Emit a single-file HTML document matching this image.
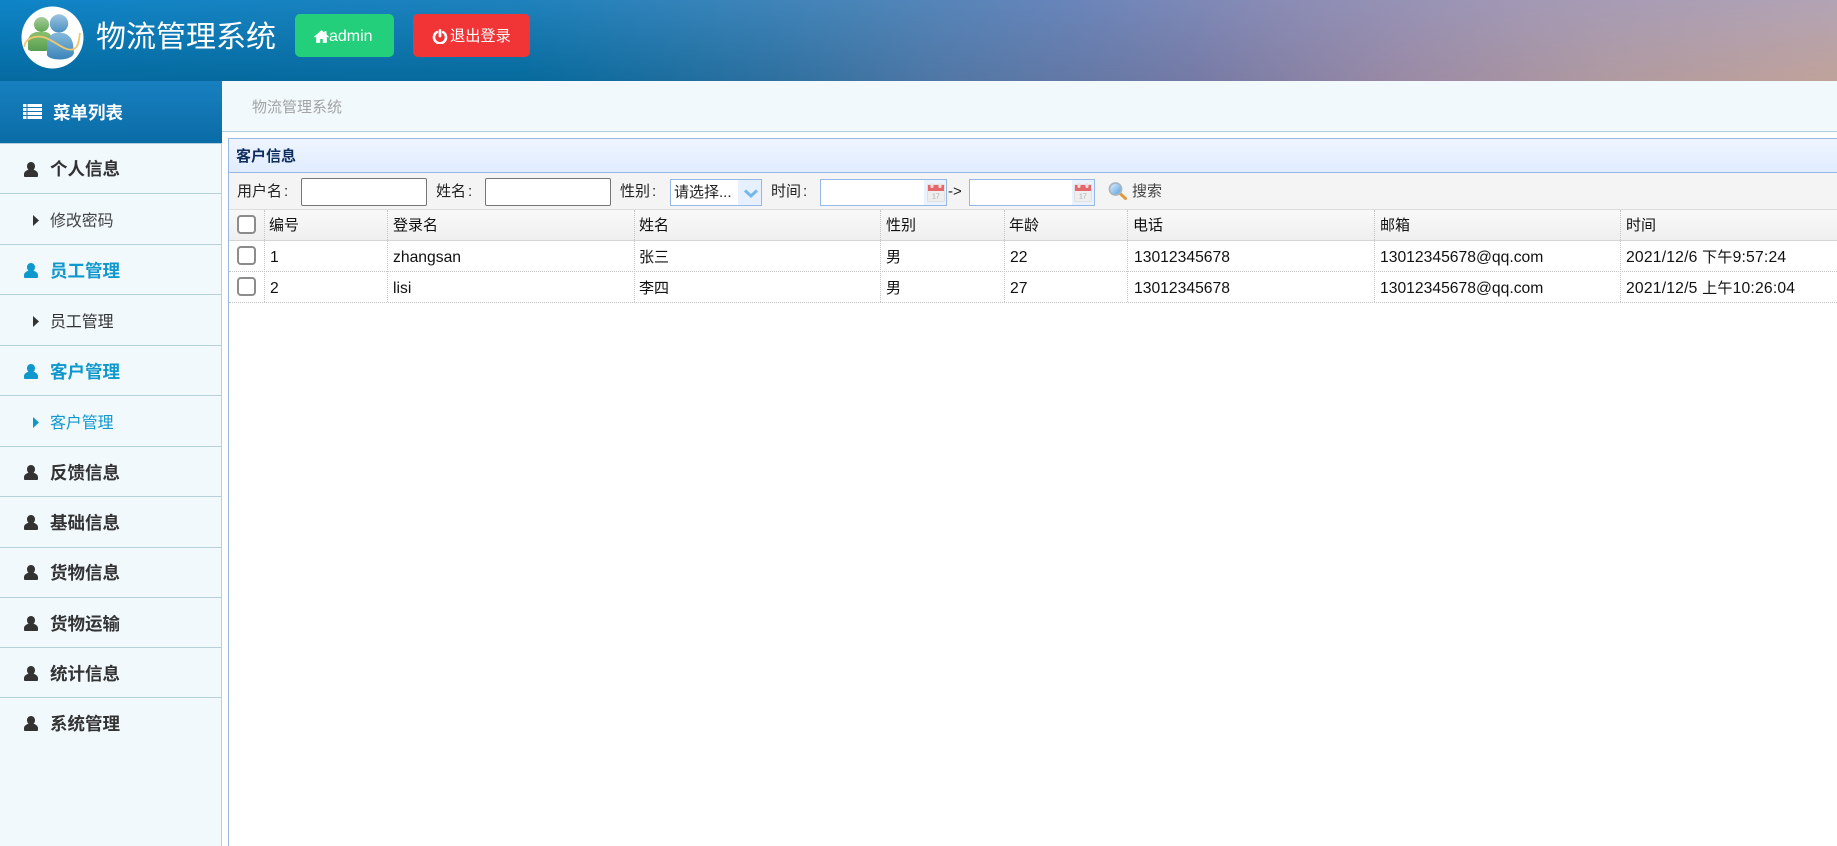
<!DOCTYPE html>
<html lang="zh-CN"><head><meta charset="utf-8"><title>物流管理系统</title>
<style>
html,body{margin:0;padding:0;width:1837px;height:846px;overflow:hidden;background:#fff;font-family:"Liberation Sans","Noto Sans CJK SC",sans-serif;color:#000}
div,span,svg,input{position:absolute;box-sizing:border-box}
.t{white-space:nowrap;line-height:30px;height:30px}
.hd{left:0;top:0;width:1837px;height:81px}
.side{left:0;top:81px;width:222px;height:765px;background:#f1f9fd;border-right:1px solid #b5cfdc}
.menu{left:0;width:221px;border-bottom:1px solid #b5cfdc}
.mt{left:50px;font-size:17.5px;font-weight:bold;color:#333;white-space:nowrap;line-height:24px;height:24px}
.st{left:50px;font-size:15.9px;color:#444;white-space:nowrap;line-height:24px;height:24px}
.ac{color:#0e98cc}
.in{background:#fff;border:1px solid #767676;border-radius:2px;height:28px;top:178px;width:126px}
.eb{background:#fff;border:1px solid #95b8e7;height:27px;top:179px}
.lb{top:178px;font-size:15px;color:#222;white-space:nowrap;line-height:28px;height:28px}
.lb i{font-style:normal;margin-left:2px}
.v{top:210px;height:92px;width:0;border-left:1px dotted #c4c4c4}
.h{left:229px;width:1608px;height:0;border-top:1px dotted #c4c4c4}
.cb{left:237px;width:19px;height:19px;background:#fff;border:2px solid #8c8c8c;border-radius:4px}
.c{font-size:15px;color:#111;white-space:nowrap;line-height:30px;height:30px}
.n{font-size:15.7px}
.d{letter-spacing:.2px}
</style></head><body>
<svg width="0" height="0" style="left:0;top:0"><defs>
<symbol id="u" viewBox="0 0 14 15"><path fill="currentColor" d="M7 0C4.600 0 3 1.900 3 4.300c0 1.500.6 2.700 1.500 3.500C2.200 8.500 0 9.800 0 12.300V14c0 .6.4 1 1 1h12c.6 0 1-.4 1-1v-1.700c0-2.500-2.200-3.800-4.500-4.500.9-.8 1.500-2 1.500-3.500C11 1.900 9.400 0 7 0z"/></symbol>
<symbol id="cal" viewBox="0 0 18 19"><rect x=".5" y="1.500" width="17" height="17" rx="1" fill="#eeeeee" stroke="#e0e0e0"/><rect x="1" y="2" width="16" height="6" fill="#e5676c"/><rect x="3.500" y="0" width="3" height="5" rx="1.500" fill="#f4e0e0"/><rect x="11.500" y="0" width="3" height="5" rx="1.500" fill="#f4e0e0"/><text x="5" y="15.500" font-size="7" fill="#a9a9a9" font-family="Liberation Sans">17</text></symbol>
<linearGradient id="gh" x1="0" y1="0" x2="0" y2="1"><stop offset="0" stop-color="#a8cc9c"/><stop offset="1" stop-color="#5fa855"/></linearGradient>
<linearGradient id="gb" x1="0" y1="0" x2="0" y2="1"><stop offset="0" stop-color="#8cc070"/><stop offset="1" stop-color="#559e50"/></linearGradient>
<linearGradient id="bh" x1="0" y1="0" x2="0" y2="1"><stop offset="0" stop-color="#9cc4e0"/><stop offset="1" stop-color="#4a90c2"/></linearGradient>
<linearGradient id="bb" x1="0" y1="0" x2="0" y2="1"><stop offset="0" stop-color="#85b8da"/><stop offset="1" stop-color="#3a85ba"/></linearGradient>
<linearGradient id="lens" x1="0" y1="0" x2="1" y2="1"><stop offset="0" stop-color="#e8f4ff"/><stop offset="1" stop-color="#4f9de0"/></linearGradient>
</defs></svg>

<div class="hd" style="background:linear-gradient(90deg,#0f85c8 0,#1f82bc 520px,#4a85b8 856px,#6a85ba 1075px,#8a8cb5 1276px,#a399b5 1528px,#b3a4b5 1837px)"></div>
<div class="hd" style="background:linear-gradient(90deg,#056a9f 0,#066a9c 520px,#2d709f 772px,#5077a5 940px,#757aa5 1192px,#9a8aa5 1402px,#b09aa0 1612px,#c0a29a 1837px);-webkit-mask-image:linear-gradient(180deg,transparent,#000);mask-image:linear-gradient(180deg,transparent,#000)"></div>

<svg style="left:21px;top:6px" width="63" height="63" viewBox="21 6 63 63">
<circle cx="52.500" cy="37.500" r="31" fill="#fff"/>
<path d="M28 49V41c0-5 4-8 8-9h10c4 1 6 4 6 8v9c-2 1.500-5 2-8 2H32c-2 0-4-1-4-2z" fill="url(#gb)"/>
<circle cx="41.500" cy="24.500" r="7.500" fill="url(#gh)"/>
<path d="M47 55V44c0-6 4-10 8-11h8c5 1 9 5 10 11l1 9c-1 4-7 6.500-14 6.500-6 0-12-1.500-13-4.500z" fill="url(#bb)"/>
<circle cx="59" cy="23.500" r="9.200" fill="url(#bh)"/>
<path d="M24.500 47C24 39 36 34 46 38S65 51 72 49.500 78.500 41 80 33" fill="none" stroke="#f3c66c" stroke-width="1.800"/>
</svg>
<div class="t" style="left:96px;top:18px;height:40px;line-height:40px;font-size:30px;color:#fff">物流管理系统</div>

<div style="left:295px;top:14px;width:99px;height:43px;background:#23cf7b;border-radius:5px"></div>
<svg style="left:314px;top:30px" width="15" height="13" viewBox="0 0 14 12"><path fill="#fff" d="M7 0 0 6.200l.8.900L2 6v6h3.800V8.300h2.400V12H12V6l1.200 1.100.8-.9-2.300-2.100V1H9.800v1.400z"/></svg>
<div class="t" style="left:329px;top:22px;font-size:16px;color:#fff">admin</div>
<div style="left:413px;top:14px;width:117px;height:43px;background:#f13537;border-radius:5px"></div>
<svg style="left:432px;top:29px" width="16" height="15" viewBox="0 0 16 15"><path fill="none" stroke="#fff" stroke-width="2.600" stroke-linecap="round" d="M4.800 3.200A6 6 0 1 0 11.200 3.200"/><path stroke="#fff" stroke-width="2.800" stroke-linecap="round" d="M8 1.500V7"/></svg>
<div class="t" style="left:450px;top:22px;font-size:15.2px;color:#fff">退出登录</div>

<!-- sidebar -->
<div class="side"></div>
<div style="left:0;top:81px;width:222px;height:62px;background:linear-gradient(180deg,#1880c0,#0a6ca6)"></div>
<svg style="left:23px;top:104px" width="19" height="15" viewBox="0 0 19 15"><path fill="#fff" d="M0 0h3.500v3H0zM4.500 0H19v3H4.500zM0 4h3.500v3H0zM4.500 4H19v3H4.500zM0 8h3.500v3H0zM4.500 8H19v3H4.500zM0 12h3.500v3H0zM4.500 12H19v3H4.500z"/></svg>
<div class="t" style="left:53px;top:98px;font-size:17.5px;font-weight:bold;color:#fff">菜单列表</div>
<div style="left:0;top:143px;width:222px;height:1px;background:#b5cfdc"></div>

<div class="menu" style="top:144px;height:50px"></div>
<svg style="left:24px;top:162px;color:#333" width="14" height="15"><use href="#u"/></svg>
<div class="mt" style="left:50px;top:157px">个人信息</div>
<div class="menu" style="top:194px;height:51px"></div>
<svg style="left:33px;top:215px" width="6" height="11"><path fill="#333" d="M0 0l6 5.500L0 11z"/></svg>
<div class="st" style="top:210px">修改密码</div>

<div class="menu" style="top:245px;height:50px"></div>
<svg style="left:24px;top:263px;color:#0e98cc" width="14" height="15"><use href="#u"/></svg>
<div class="mt ac" style="top:259px">员工管理</div>
<div class="menu" style="top:295px;height:51px"></div>
<svg style="left:33px;top:316px" width="6" height="11"><path fill="#333" d="M0 0l6 5.500L0 11z"/></svg>
<div class="st" style="top:311px;color:#333">员工管理</div>

<div class="menu" style="top:346px;height:50px"></div>
<svg style="left:24px;top:364px;color:#0e98cc" width="14" height="15"><use href="#u"/></svg>
<div class="mt ac" style="top:360px">客户管理</div>
<div class="menu" style="top:396px;height:51px"></div>
<svg style="left:33px;top:417px" width="6" height="11"><path fill="#0e98cc" d="M0 0l6 5.500L0 11z"/></svg>
<div class="st ac" style="top:412px">客户管理</div>

<div class="menu" style="top:447px;height:50px"></div>
<svg style="left:24px;top:465px;color:#333" width="14" height="15"><use href="#u"/></svg>
<div class="mt" style="top:461px">反馈信息</div>
<div class="menu" style="top:497px;height:51px"></div>
<svg style="left:24px;top:515px;color:#333" width="14" height="15"><use href="#u"/></svg>
<div class="mt" style="top:511px">基础信息</div>
<div class="menu" style="top:548px;height:50px"></div>
<svg style="left:24px;top:565px;color:#333" width="14" height="15"><use href="#u"/></svg>
<div class="mt" style="top:561px">货物信息</div>
<div class="menu" style="top:598px;height:50px"></div>
<svg style="left:24px;top:616px;color:#333" width="14" height="15"><use href="#u"/></svg>
<div class="mt" style="top:612px">货物运输</div>
<div class="menu" style="top:648px;height:50px"></div>
<svg style="left:24px;top:666px;color:#333" width="14" height="15"><use href="#u"/></svg>
<div class="mt" style="top:662px">统计信息</div>
<svg style="left:24px;top:716px;color:#333" width="14" height="15"><use href="#u"/></svg>
<div class="mt" style="top:712px">系统管理</div>

<!-- breadcrumb -->
<div style="left:222px;top:81px;width:1615px;height:51px;background:#f1f9fc;border-bottom:1px solid #b5cfdc"></div>
<div class="t" style="left:252px;top:93px;font-size:15px;color:#a3a3a3">物流管理系统</div>

<!-- panel -->
<div style="left:228px;top:138px;width:1px;height:708px;background:#95b8e7"></div>
<div style="left:228px;top:138px;width:1609px;height:35px;background:linear-gradient(180deg,#eff5ff,#e0ecff);border-top:1px solid #95b8e7;border-bottom:1px solid #95b8e7;border-left:1px solid #95b8e7"></div>
<div class="t" style="left:236px;top:142px;font-size:15px;font-weight:bold;color:#0e2d5f">客户信息</div>

<!-- toolbar -->
<div style="left:229px;top:173px;width:1608px;height:37px;background:#f4f4f4;border-bottom:1px solid #ddd"></div>
<div class="lb" style="left:237px">用户名<i>:</i></div>
<div class="in" style="left:301px"></div>
<div class="lb" style="left:436px">姓名<i>:</i></div>
<div class="in" style="left:485px"></div>
<div class="lb" style="left:620px">性别<i>:</i></div>
<div class="eb" style="left:670px;width:92px"></div>
<div style="left:738px;top:180px;width:23px;height:25px;background:#e6f0ff"></div>
<svg style="left:744px;top:189px" width="14" height="9" viewBox="0 0 14 9"><path fill="none" stroke="#74b6ee" stroke-width="3" d="M1 1.500l6 5.500 6-5.500"/></svg>
<div class="lb" style="left:674px;top:179px;color:#222;font-size:15px">请选择...</div>
<div class="lb" style="left:771px">时间<i>:</i></div>
<div class="eb" style="left:820px;width:127px"></div>
<div style="left:924px;top:180px;width:22px;height:25px;background:#eaf2ff"></div>
<svg style="left:927px;top:183px" width="18" height="19"><use href="#cal"/></svg>
<div class="lb" style="left:948px;font-size:15px">-&gt;</div>
<div class="eb" style="left:969px;width:126px"></div>
<div style="left:1072px;top:180px;width:22px;height:25px;background:#eaf2ff"></div>
<svg style="left:1074px;top:183px" width="18" height="19"><use href="#cal"/></svg>
<svg style="left:1108px;top:182px" width="19" height="18" viewBox="0 0 19 18"><path d="M11.500 11l6 5.500" stroke="#e09a3a" stroke-width="3" stroke-linecap="round"/><circle cx="7.500" cy="7" r="6" fill="url(#lens)" stroke="#a9b6c2" stroke-width="1.800"/></svg>
<div class="lb" style="left:1132px;color:#444">搜索</div>

<!-- table header -->
<div style="left:229px;top:210px;width:1608px;height:31px;background:linear-gradient(180deg,#f9f9f9,#efefef);border-bottom:1px solid #d5d5d5"></div>
<div class="v" style="left:264px"></div><div class="v" style="left:387px"></div><div class="v" style="left:634px"></div><div class="v" style="left:880px"></div><div class="v" style="left:1004px"></div><div class="v" style="left:1127px"></div><div class="v" style="left:1374px"></div><div class="v" style="left:1620px"></div>
<div class="h" style="top:271px"></div><div class="h" style="top:302px"></div>
<div class="cb" style="top:215px"></div><div class="cb" style="top:246px"></div><div class="cb" style="top:277px"></div>

<div class="c" style="left:269px;top:211px">编号</div><div class="c" style="left:393px;top:211px">登录名</div><div class="c" style="left:639px;top:211px">姓名</div><div class="c" style="left:886px;top:211px">性别</div><div class="c" style="left:1009px;top:211px">年龄</div><div class="c" style="left:1133px;top:211px">电话</div><div class="c" style="left:1380px;top:211px">邮箱</div><div class="c" style="left:1626px;top:211px">时间</div>

<div class="c n" style="left:270px;top:243px">1</div><div class="c n" style="left:393px;top:243px">zhangsan</div><div class="c" style="left:639px;top:243px">张三</div><div class="c" style="left:886px;top:243px">男</div><div class="c n" style="left:1010px;top:243px">22</div><div class="c n" style="left:1134px;top:243px">13012345678</div><div class="c n" style="left:1380px;top:243px">13012345678@qq.com</div><div class="c n d" style="left:1626px;top:243px">2021/12/6 <span style="position:static;font-size:15px">下午</span>9:57:24</div>

<div class="c n" style="left:270px;top:274px">2</div><div class="c n" style="left:393px;top:274px">lisi</div><div class="c" style="left:639px;top:274px">李四</div><div class="c" style="left:886px;top:274px">男</div><div class="c n" style="left:1010px;top:274px">27</div><div class="c n" style="left:1134px;top:274px">13012345678</div><div class="c n" style="left:1380px;top:274px">13012345678@qq.com</div><div class="c n d" style="left:1626px;top:274px">2021/12/5 <span style="position:static;font-size:15px">上午</span>10:26:04</div>
</body></html>
